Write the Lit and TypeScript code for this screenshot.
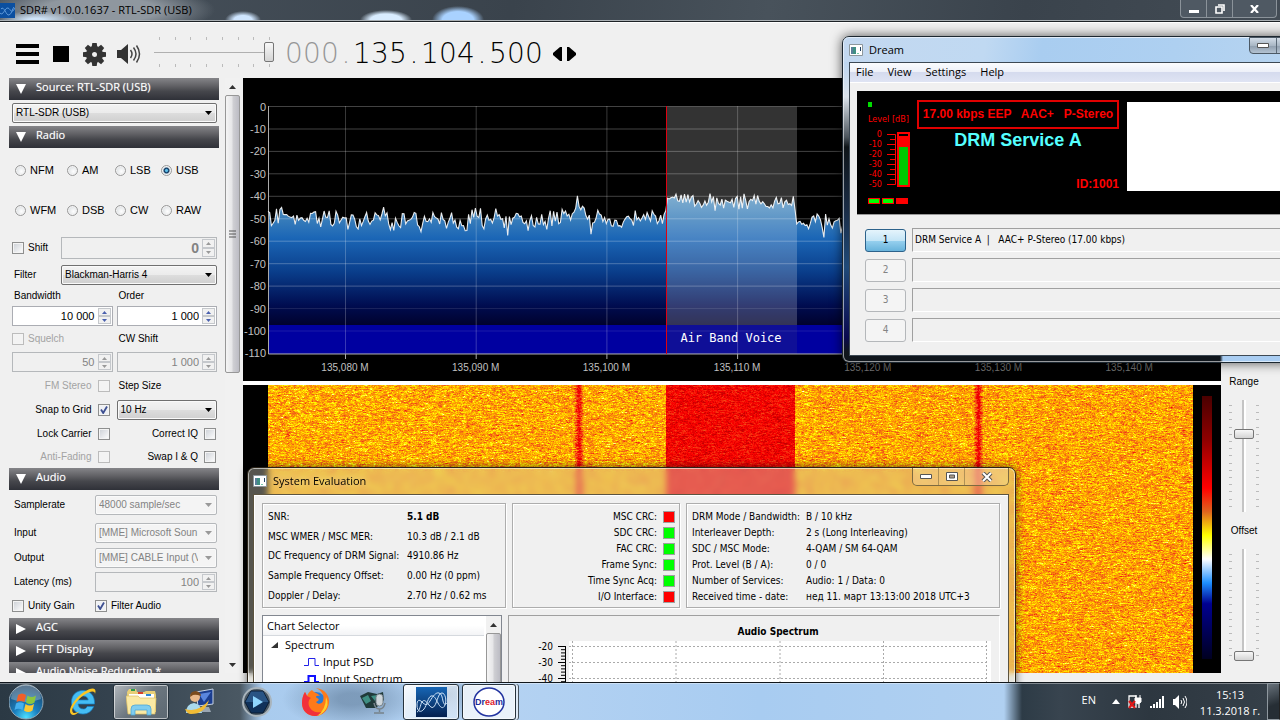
import { LitElement, html, svg, css } from "lit";
import { customElement } from "lit/decorators.js";

/* ---------- shared helpers ---------- */

const rng = (seed: number) => () => {
  seed = (seed + 0x6d2b79f5) | 0;
  let t = Math.imul(seed ^ (seed >>> 15), 1 | seed);
  t = (t + Math.imul(t ^ (t >>> 7), 61 | t)) ^ t;
  return ((t ^ (t >>> 14)) >>> 0) / 4294967296;
};

const base = css`
  :host, *, *::before, *::after { box-sizing: border-box; }
  button, input, select { font: inherit; color: inherit; margin: 0; padding: 0; border: 0; border-radius: 0; outline: 0; }
  button { background: none; }
  svg { display: block; }
  .scroll { display: flex; flex-direction: column; background: #f1f1f1; }
  .scroll button { height: 17px; flex: none; display: grid; place-items: center; }
  .scroll .thumb { border: 1px solid #979797; border-radius: 2px; background: linear-gradient(90deg, #f5f5f5, #e6e6e8 45%, #cfcfd3 55%, #bcbcc4); display: grid; place-items: center; }
  .scroll .rest { flex: 1; }
`;

const upArrow = svg`<svg width="7" height="4" viewBox="0 0 7 4"><path d="M0 4 3.5 0 7 4z" fill="#333"/></svg>`;
const downArrow = svg`<svg width="7" height="4" viewBox="0 0 7 4"><path d="M0 0 3.5 4 7 0z" fill="#333"/></svg>`;
const appIcon = html`<svg width="14" height="12" viewBox="0 0 14 12"><path d="M.5.5h13v11H.5z" fill="#fff" stroke="#8d979c"/><path d="M2 3h5v7H2z" fill="#3f8f83"/><path d="M2 3h2v7H2z" fill="#5b7f9a"/><path d="M8 9h2v1H8z" fill="#7ca"/><path d="M11 3h1v4h-1z" fill="#246"/></svg>`;

/* ---------- receiver side panel ---------- */

@customElement("sdr-sidebar")
class SdrSidebar extends LitElement {
  static styles = [base, css`
    :host { display: flex; gap: 6px; font: 10px/14px "Liberation Sans", Arial, sans-serif; color: #000; min-height: 0; }
    .panel { width: 210px; overflow: hidden; }
    .head { display: flex; width: 100%; height: 22px; padding: 0 0 4px 7px; gap: 10px; align-items: center; text-align: left; color: #fff;
      font: 11px/16px "Open Sans", "Noto Sans", sans-serif; text-shadow: 0 0 1px #fff8; background: linear-gradient(#858589, #626266 35%, #46474c 60%, #2f3138); }
    .head svg { position: relative; top: 2px; }
    .row { display: flex; align-items: center; padding: 0 2px 0 3px; gap: 4px; height: 24px; }
    .pair { display: grid; grid-template-columns: minmax(0, 1fr) minmax(0, 1fr); }
    .h16 { height: 16px; } .h22 { height: 22px; } .h26 { height: 26px; } .h28 { height: 28px; } .h30 { height: 30px; }
    .radios { display: grid; grid-template-columns: 52px 48px 46px 1fr; grid-auto-rows: 40px; padding: 2px 0 0 6px; margin: 0 0 4px; border: 0; font-size: 11px; }
    .radios label, .tick { display: flex; align-items: center; gap: 4px; }
    .label { padding-left: 2px; }
    .wide { width: 45px; } .audio { width: 79px; }
    .right { justify-content: flex-end; padding-right: 1px; gap: 6px; }
    .right:first-child { padding-right: 3px; }
    .off { color: #a3a3a3; }
    input[type="radio"] { appearance: none; width: 11px; height: 11px; border: 1px solid #999; border-radius: 50%; background: radial-gradient(circle at 60% 60%, #fff, #cfd4d8); box-shadow: inset 0 0 0 1px #f4f4f4; }
    input[type="radio"]:checked { background: radial-gradient(circle, #5fc0ea 0 15%, #123a63 35%, #e6eef3 60%); }
    input[type="checkbox"] { appearance: none; width: 12px; height: 12px; border: 1px solid #8e8f8f; background: linear-gradient(135deg, #cbcfd5, #fff); box-shadow: inset 0 0 0 1px #f4f4f4; }
    input[type="checkbox"]:disabled { border-color: #bcbcbc; background: #f3f3f3; }
    input[type="checkbox"]:checked { background: url("data:image/svg+xml,%3Csvg xmlns='http://www.w3.org/2000/svg' viewBox='0 0 10 10'%3E%3Cpath d='M2 4.5 4.2 8 8 1.5' fill='none' stroke='%233d4f91' stroke-width='1.8'/%3E%3C/svg%3E") #eef0f4; }
    select { appearance: none; flex: 1; min-width: 0; height: 20px; padding: 0 18px 0 3px; border: 1px solid #707070; border-radius: 2px; overflow: hidden;
      background: url("data:image/svg+xml,%3Csvg xmlns='http://www.w3.org/2000/svg' width='7' height='4'%3E%3Cpath d='M0 0h7L3.5 4z'/%3E%3C/svg%3E") no-repeat right 4px center, linear-gradient(#f3f3f3, #ebebeb 50%, #dddddd 51%, #cfcfcf); box-shadow: inset 0 0 0 1px #fafafa; }
    select:disabled { opacity: 1; color: #838383; border-color: #b5b8bb;
      background: url("data:image/svg+xml,%3Csvg xmlns='http://www.w3.org/2000/svg' width='7' height='4'%3E%3Cpath d='M0 0h7L3.5 4z' fill='%23999'/%3E%3C/svg%3E") no-repeat right 4px center, #f4f4f4; }
    .spin { display: flex; flex: 1; min-width: 0; height: 20px; border: 1px solid #abadb3; background: #fff; padding: 1px; font-size: 11px; }
    .spin input { flex: 1; min-width: 0; width: 0; background: none; text-align: right; padding-right: 3px; }
    .spin.off { background: #f0f0f0; color: #838383; border-color: #b5b8bb; }
    .spin.big { height: 22px; font-size: 14px; font-weight: bold; }
    .arrows { display: flex; flex-direction: column; width: 13px; }
    .arrows button { flex: 1; display: grid; place-items: center; border: 1px solid #c5c8cc; background: #f1f1f1; color: #4a60ae; }
    .off .arrows button { color: #999; }
    .scroll { width: 15px; }
    .scroll .thumb { height: 278px; }
  `];

  head(text: string, open = true) {
    return html`<button class="head">${open
      ? html`<svg width="10" height="10" viewBox="0 0 10 10"><path d="M0 0h10L5 10z" fill="#fff"/></svg>`
      : html`<svg width="10" height="10" viewBox="0 0 10 10"><path d="M0 0v10l10-5z" fill="#fff"/></svg>`}<span>${text}</span></button>`;
  }

  spin(id: string, value: string, off = false, cls = "") {
    return html`<div class="spin ${off ? "off" : ""} ${cls}">
      <input id=${id} type="text" aria-label=${id} .value=${value} ?disabled=${off} />
      <div class="arrows">
        <button aria-label="Increase"><svg width="5" height="3" viewBox="0 0 5 3"><path d="M0 3 2.5 0 5 3z" fill="currentColor"/></svg></button>
        <button aria-label="Decrease"><svg width="5" height="3" viewBox="0 0 5 3"><path d="M0 0 2.5 3 5 0z" fill="currentColor"/></svg></button>
      </div></div>`;
  }

  after(text: string, off = false, checked = false) {
    return html`<label class="tick ${off ? "off" : ""}"><input type="checkbox" ?disabled=${off} .checked=${checked} />${text}</label>`;
  }

  before(text: string, off = false, checked = false) {
    return html`<label class="tick right ${off ? "off" : ""}">${text}<input type="checkbox" ?disabled=${off} .checked=${checked} /></label>`;
  }

  render() {
    return html`
      <div class="panel">
        ${this.head("Source: RTL-SDR (USB)")}
        <div class="row h26"><select aria-label="Source"><option>RTL-SDR (USB)</option></select></div>
        ${this.head("Radio")}
        <fieldset class="radios">
          ${["NFM", "AM", "LSB", "USB", "WFM", "DSB", "CW", "RAW"].map(
            (m) => html`<label><input type="radio" name="mode" .checked=${m === "USB"} />${m}</label>`)}
        </fieldset>
        <div class="row h28"><span class="wide">${this.after("Shift")}</span>${this.spin("shift", "0", true, "big")}</div>
        <div class="row h26"><label class="label wide" for="filter">Filter</label><select id="filter"><option>Blackman-Harris 4</option></select></div>
        <div class="row pair h16"><label class="label" for="bandwidth">Bandwidth</label><label class="label" for="order">Order</label></div>
        <div class="row pair">${this.spin("bandwidth", "10 000")}${this.spin("order", "1 000")}</div>
        <div class="row pair h22">${this.after("Squelch", true)}<label class="label" for="cwshift">CW Shift</label></div>
        <div class="row pair">${this.spin("squelch", "50", true)}${this.spin("cwshift", "1 000", true)}</div>
        <div class="row pair">${this.before("FM Stereo", true)}<label class="label" for="step">Step Size</label></div>
        <div class="row pair">${this.before("Snap to Grid", false, true)}<select id="step"><option>10 Hz</option></select></div>
        <div class="row pair">${this.before("Lock Carrier")}${this.before("Correct IQ")}</div>
        <div class="row pair h22">${this.before("Anti-Fading", true)}${this.before("Swap I & Q")}</div>
        ${this.head("Audio")}
        <div class="row h30"><label class="label audio" for="rate">Samplerate</label><select id="rate" disabled><option>48000 sample/sec</option></select></div>
        <div class="row h26"><label class="label audio" for="input">Input</label><select id="input" disabled><option>[MME] Microsoft Soun</option></select></div>
        <div class="row"><label class="label audio" for="output">Output</label><select id="output" disabled><option>[MME] CABLE Input (V</option></select></div>
        <div class="row"><label class="label audio" for="latency">Latency (ms)</label>${this.spin("latency", "100", true)}</div>
        <div class="row"><span class="audio">${this.after("Unity Gain")}</span>${this.after("Filter Audio", false, true)}</div>
        ${this.head("AGC", false)}${this.head("FFT Display", false)}${this.head("Audio Noise Reduction *", false)}
      </div>
      <div class="scroll">
        <button aria-label="Scroll up">${upArrow}</button>
        <div class="thumb"><svg width="7" height="8" viewBox="0 0 7 8"><path d="M0 1h7M0 4h7M0 7h7" stroke="#555"/></svg></div>
        <div class="rest"></div>
        <button aria-label="Scroll down">${downArrow}</button>
      </div>`;
  }
}

/* ---------- spectrum plot ---------- */

@customElement("spectrum-view")
class SpectrumView extends LitElement {
  static styles = [base, css`
    :host { display: block; height: 303px; background: #000; overflow: hidden; }
    .plot { width: 100%; height: 303px; }
    .axis { font: 11px "Liberation Sans", Arial, sans-serif; fill: #c0c0c0; }
    .freq { font-size: 10px; }
    .band { font: 12px "DejaVu Sans Mono", monospace; fill: #fff; }
  `];

  private trace() {
    const r = rng(77);
    const pts: string[] = [];
    let slow = 0;
    for (let x = 25; x < 620; x += 1.7) {
      slow = slow * 0.6 + (r() - 0.5) * 9;
      let y = 140.5 + slow + (r() - 0.5) * 14;
      if (r() > 0.94) y += 8;
      const d = Math.abs(x - 336.5);
      if (d < 9) y -= (9 - d) * 2.3;
      if (x > 423 && x < 553) y = 123 + slow * 0.9 + (r() - 0.5) * 12;
      else if (x >= 553) y += 3;
      pts.push(`${x.toFixed(1)} ${y.toFixed(1)}`);
    }
    return pts.join("L");
  }

  render() {
    const line = this.trace();
    const rows = Array.from({ length: 12 }, (_, i) => i);
    return html`<svg class="plot" viewBox="0 0 978 303" preserveAspectRatio="xMinYMin slice">
      <defs><linearGradient id="fill" gradientUnits="userSpaceOnUse" x1="0" y1="100" x2="0" y2="250">
        <stop offset="0" stop-color="#7fb0cc"/><stop offset=".25" stop-color="#3d81bb"/><stop offset=".4" stop-color="#1b66b6"/>
        <stop offset=".62" stop-color="#0a3f8c"/><stop offset=".85" stop-color="#000c50"/><stop offset="1" stop-color="#000028"/>
      </linearGradient></defs>
      <path d="M25 276L${line}L620 276z" fill="url(#fill)"/>
      <path d="M25 247H978V276H25z" fill="#0000a0"/>
      <path d="M423 28.5H554V276H423z" fill="#fff" fill-opacity=".2"/>
      <path d="M423 247H554V276H423z" fill="#00008c" fill-opacity=".7"/>
      ${rows.map((i) => svg`<path d="M25 ${(28.5 + i * 22.45).toFixed(1)}H978" stroke="#fff" stroke-opacity=${i < 9 ? 0.26 : 0.1}/>
        <text class="axis" x="23" y=${Math.round(32.5 + i * 22.45)} text-anchor="end">${i ? -10 * i : 0}</text>`)}
      ${rows.slice(0, 7).map((i) => svg`<path d="M${102.5 + i * 130.7} 28V276" stroke="#fff" stroke-opacity=".22"/>
        <path d="M${102.5 + i * 130.7} 276v5" stroke="#aaa"/>
        <text class="axis freq" x=${102 + i * 130.7} y="293" text-anchor="middle" fill-opacity=${i > 3 ? 0.6 : 1}>135,${80 + i * 10 < 100 ? "0" : ""}${80 + i * 10} M</text>`)}
      <path d="M25.5 28V276H978" fill="none" stroke="#aaa"/>
      <path d="M${line}" fill="none" stroke="#fff" stroke-width="1.1" stroke-opacity=".9"/>
      <path d="M423.5 28V276" stroke="#e00010"/>
      <text class="band" x="488" y="264" text-anchor="middle">Air Band Voice</text>
    </svg>`;
  }
}

/* ---------- waterfall ---------- */

@customElement("waterfall-view")
class WaterfallView extends LitElement {
  static styles = [base, css`
    :host { display: flex; flex: 1; min-height: 0; background: #000; padding-left: 25px; }
    .field { flex: 1; min-width: 0; position: relative; overflow: hidden; }
    canvas { position: absolute; inset: 0; width: 100%; height: 100%; }
    .legend { width: 28px; padding: 11px 9px 14px 9px; display: flex; }
    .ramp { flex: 1; background: linear-gradient(#4a0000, #900000 17%, #ff0000 35%, #e0641e 44%, #ffff00 53%, #ffffff 62%, #1e90ff 71%, #000090 79%, #000020); }
  `];

  firstUpdated() {
    const c = this.renderRoot.querySelector("canvas")!;
    const w = (c.width = Math.max(1, c.clientWidth));
    const h = (c.height = Math.max(1, c.clientHeight));
    const g = c.getContext("2d")!;
    const img = g.createImageData(w, h);
    const r = rng(9);
    const stops = [[170, 0, 0], [250, 0, 0], [240, 88, 26], [255, 165, 0], [255, 255, 0], [255, 255, 255], [140, 200, 255]];
    for (let y = 0; y < h; y++) {
      let prev = 0;
      for (let x = 0; x < w; x++) {
        const n = r() + r() + r() + r() - 2;
        prev = prev * 0.45 + n * 0.85;
        let v = 3.05 + prev * 0.95 - (x / w) * 0.1;
        if (x > 397 && x < 527) v = 1 + prev * 0.6;
        const d = Math.min(Math.abs(x - 310.5), Math.abs(x - 710));
        if (d < 5) v -= (5 - d) * 0.45;
        v = Math.max(0.3, Math.min(5.9, v));
        if (d < 4) v = Math.max(0.8, v);
        const i = Math.floor(v), f = v - i, o = (y * w + x) * 4;
        for (let k = 0; k < 3; k++) img.data[o + k] = stops[i][k] * (1 - f) + stops[i + 1][k] * f;
        img.data[o + 3] = 255;
      }
    }
    g.putImageData(img, 0, 0);
  }

  render() {
    return html`<div class="field"><canvas></canvas></div><div class="legend"><div class="ramp"></div></div>`;
  }
}

/* ---------- main receiver window ---------- */

@customElement("sdr-window")
class SdrWindow extends LitElement {
  static styles = [base, css`
    :host { display: flex; flex-direction: column; height: 100%; background: #f0f0f0; font: 10px/14px "Liberation Sans", Arial, sans-serif; }
    .title { display: flex; align-items: flex-start; height: 22px; border-bottom: 1px solid #1d2226; box-shadow: inset 0 -1px #aab0b4, 0 1px #fff; color: #000;
      font: 11px/20px "Open Sans", sans-serif; background:
        radial-gradient(18px 9px at 243px 20px, #cfe6ff 50%, transparent), radial-gradient(26px 10px at 386px 20px, #d8ecff 60%, transparent),
        radial-gradient(26px 14px at 458px 20px, #a9d2ff 60%, transparent), radial-gradient(40px 9px at 36px 20px, #cfe4f8 20%, transparent),
        radial-gradient(115px 26px at 100px 10px, #8f979f 50%, transparent), linear-gradient(100deg, #48525c, #3a434c 40%, #48525b 60%, #3a434c 80%, #434c55); }
    .logo { margin: 3px 5px 0 0; }
    .caption { flex: 1; }
    .winbtns { display: flex; height: 18px; margin-right: 3px; border: 1px solid #8b939a; border-top: 0; border-radius: 0 0 4px 4px; background: #4f5963; }
    .winbtns button { width: 26px; display: grid; place-items: center; border-right: 1px solid #8b939a; }
    .winbtns button:last-child { width: 43px; border: 0; }
    .tools { display: flex; align-items: center; height: 56px; padding: 8px 0 0 16px; }
    .tools .icon { display: grid; place-items: center start; }
    .menu { width: 37px; } .stop { width: 30px; } .gear { width: 34px; } .mute { width: 37px; }
    .volume { position: relative; width: 120px; height: 30px; display: flex; flex-direction: column; justify-content: space-between; margin: 0 11px 4px 0; }
    .ticks { display: flex; justify-content: space-between; padding: 0 4px 0 5px; }
    .ticks i { width: 1px; height: 3px; background: #bbb; }
    .volume input { appearance: none; position: absolute; inset: 4px 0; width: 120px; background: none; }
    input::-webkit-slider-runnable-track { background: linear-gradient(#b0b0b0, #b0b0b0) center / 100% 1px no-repeat; }
    .volume input::-webkit-slider-thumb { appearance: none; width: 10px; height: 20px; border: 1px solid #767676; border-radius: 2px; background: linear-gradient(#f8f8f8, #d4d4d4); }
    .freq { display: flex; font: 200 28px/30px "DejaVu Sans", sans-serif; margin: 0 10px 0 0; color: #000; }
    .freq span { width: 18px; text-align: center; }
    .freq .dot { width: 14px; }
    .freq .dim { color: #969696; }
    .step { display: flex; gap: 5px; }
    .body { display: flex; flex: 1; min-height: 0; padding: 0 0 9px 9px; }
    .views { display: flex; flex-direction: column; flex: 1; min-width: 0; gap: 4px; margin-left: 3px; background: #fff; }
    .levels { width: 59px; display: flex; flex-direction: column; align-items: center; padding: 297px 13px 0 0; }
    .meter { display: flex; height: 112px; margin: 11px 0 12px; gap: 2px; }
    .vticks { display: flex; flex-direction: column; justify-content: space-between; padding: 5px 0; }
    .vticks i { width: 3px; height: 1px; background: #bbb; }
    .meter input { appearance: none; writing-mode: vertical-lr; direction: rtl; width: 20px; height: 112px; background: linear-gradient(90deg, #c4c4c4 50%, #fff 50%) center / 4px 100% no-repeat; }
    .meter input::-webkit-slider-runnable-track { background: none; }
    .meter input::-webkit-slider-thumb { appearance: none; width: 20px; height: 10px; border: 1px solid #767676; border-radius: 2px; background: linear-gradient(#f8f8f8, #d4d4d4); }
  `];

  meter(label: string, value: number) {
    const t = Array.from({ length: 15 }, () => html`<i></i>`);
    return html`<label for=${label}>${label}</label>
      <div class="meter"><div class="vticks">${t}</div><input id=${label} type="range" min="0" max="100" .value=${String(value)} /><div class="vticks">${t}</div></div>`;
  }

  render() {
    const freq = "000.135.104.500";
    const ticks = Array.from({ length: 8 }, () => html`<i></i>`);
    const teeth = Array.from({ length: 8 }, (_, i) => svg`<path d="M9.3 0h4.4l.6 4h-5.6z" transform="rotate(${i * 45} 11.5 11.5)"/>`);
    return html`
      <div class="title">
        <svg class="logo" width="15" height="15" viewBox="0 0 15 15"><path d="M0 0h15v15H0z" fill="#0b4fa0"/><path d="M0 10C3 14 5 4 8 5s3 7 7 0M1 6c3-4 5 7 8 6s3-6 5-8" fill="none" stroke="#5f9ada"/></svg>
        <span class="caption">SDR# v1.0.0.1637 - RTL-SDR (USB)</span>
        <div class="winbtns">
          <button aria-label="Minimize"><svg width="10" height="10" viewBox="0 0 10 10"><path d="M0 6h10v3H0z" fill="#fff"/></svg></button>
          <button aria-label="Restore"><svg width="10" height="10" viewBox="0 0 10 10"><path d="M3 1h6v6M1 3h6v6H1z" fill="none" stroke="#fff" stroke-width="1.6"/></svg></button>
          <button aria-label="Close"><svg width="9" height="8" viewBox="0 0 9 8"><path d="M1 0 8 8M8 0 1 8" stroke="#fff" stroke-width="2.2"/></svg></button>
        </div>
      </div>
      <div class="tools">
        <button class="icon menu" aria-label="Menu"><svg width="23" height="20" viewBox="0 0 23 20"><path d="M0 0h23v4H0zM0 8h23v4H0zM0 16h23v4H0z"/></svg></button>
        <button class="icon stop" aria-label="Stop"><svg width="16" height="16" viewBox="0 0 16 16"><path d="M0 0h16v16H0z"/></svg></button>
        <button class="icon gear" aria-label="Settings"><svg width="23" height="23" viewBox="0 0 23 23" fill="#333">${teeth}<path fill-rule="evenodd" d="M11.5 3a8.5 8.5 0 1 0 0 17 8.5 8.5 0 0 0 0-17zm0 6a2.5 2.5 0 1 1 0 5 2.5 2.5 0 0 1 0-5z"/></svg></button>
        <button class="icon mute" aria-label="Mute"><svg width="24" height="20" viewBox="0 0 24 20"><path d="M0 6h4l7-6v20l-7-6H0z" fill="#333"/><path d="M13.5 6q3 4 0 8M16.5 3.5q5 6.5 0 13M19.5 1.5q6 8.5 0 17" fill="none" stroke="#444" stroke-width="1.5"/></svg></button>
        <div class="volume"><div class="ticks">${ticks}</div><input type="range" aria-label="Volume" min="0" max="100" .value=${"100"} /><div class="ticks">${ticks}</div></div>
        <div class="freq">${[...freq].map((c, i) => html`<span class="${c === "." ? "dot" : ""} ${i < 4 ? "dim" : ""}">${c}</span>`)}</div>
        <div class="step">
          <button aria-label="Step down"><svg width="9" height="14" viewBox="0 0 9 14"><path d="M9 0v14L7 14 0 8V6L7 0z"/></svg></button>
          <button aria-label="Step up"><svg width="9" height="14" viewBox="0 0 9 14"><path d="M0 0v14l2 0 7-6V6L2 0z"/></svg></button>
        </div>
      </div>
      <div class="body">
        <sdr-sidebar></sdr-sidebar>
        <div class="views"><spectrum-view></spectrum-view><waterfall-view></waterfall-view></div>
        <div class="levels">${this.meter("Range", 72)}${this.meter("Offset", 0)}</div>
      </div>`;
  }
}

/* ---------- Dream window ---------- */

@customElement("dream-window")
class DreamWindow extends LitElement {
  static styles = [base, css`
    :host { display: block; border: 1px solid #1c2730; border-radius: 7px 7px 0 7px; box-shadow: 0 0 12px #000a; font: 10px/14px "DejaVu Sans Condensed", "DejaVu Sans", sans-serif; color: #000;
      background: linear-gradient(90deg, transparent 377px, #a9cdf2 380px) 0 100% / 100% 8px no-repeat, linear-gradient(#bed6f0 0 25px, #dbe3ec 60px, #4d565e 100px, #0e1418 110px, #1a2c44 170px, #204a78 230px, #0a0a50 300px, #10161c 315px); }
    .frame { border: 1px solid #ffffff90; border-right: 0; border-radius: 6px; padding: 0 0 5px 5px; }
    .title { position: relative; display: flex; align-items: center; gap: 6px; height: 24px; font: 11px/24px "Open Sans", sans-serif; background: linear-gradient(100deg, #c3d8f0, #c0d9f2 30%, #a9cdf0 42%, #aed0f1 70%, #b9d5f0); margin-left: -5px; padding-left: 5px; border-radius: 5px 0 0 0; }
    .ctl { position: absolute; right: 0; top: -1px; width: 66px; height: 17px; display: flex; border: 1px solid #4c5965; border-radius: 0 0 4px 4px; background: linear-gradient(#d3dde8, #a9b7c5 50%, #8e9dad 51%, #b4c3d2); }
    .ctl button { width: 27px; display: grid; place-items: center; border-right: 1px solid #5b6a78; }
    .client { background: #f0f0f0; border: 1px solid #3d4954; border-right: 0; }
    .menu { display: flex; gap: 14px; height: 20px; padding-left: 6px; font: 11px/18px "Open Sans", sans-serif; background: linear-gradient(#fbfcfe, #eef1f9 45%, #d5dbee 50%, #dfe4f3); border-bottom: 1px solid #fff; }
    .display { display: flex; height: 124px; margin: 8px 0 0 7px; background: #000; border-bottom: 1px solid #999; color: #f00; }
    .level { width: 60px; padding: 11px 0 0 11px; font-size: 9px; line-height: 10px; }
    .led { width: 4px; height: 5px; background: #0d0; margin-bottom: 7px; }
    .gauge { display: flex; gap: 3px; margin: 5px 0; white-space: nowrap; }
    .nums { width: 14px; text-align: right; height: 60px; }
    .lamps { display: flex; gap: 2px; padding-top: 4px; }
    .lamps i { width: 12px; height: 6px; border: 1px solid #f00; background: #0f0; }
    .lamps i.bad { background: #f00; }
    .info { display: flex; flex-direction: column; width: 202px; margin: 9px 8px 0 0; font: bold 12px/14px "Liberation Sans", Arial, sans-serif; }
    .codec { height: 29px; border: 2px solid #e00000; line-height: 25px; text-align: center; white-space: pre; }
    .name { color: #5ff; font-size: 18px; line-height: 22px; text-align: center; }
    .id { text-align: right; margin-top: 26px; }
    .text { flex: 1; background: #fff; margin: 11px 0 23px; }
    .services { display: grid; gap: 6px; padding: 13px 0 13px 15px; margin: 0; }
    .service { display: flex; align-items: center; gap: 6px; height: 24px; }
    .service button { width: 41px; height: 23px; border: 1px solid #b4b7ba; border-radius: 3px; background: #f4f4f4; color: #838383; }
    .service button.on { color: #000; border-color: #2c628b; background: linear-gradient(#e5f4fc, #c4e5f6 50%, #98d1ef 51%, #68b3db); }
    .field { flex: 1; height: 24px; padding: 0 2px; line-height: 22px; white-space: pre; border: 1px solid #fff; border-top-color: #a0a0a0; border-left-color: #a0a0a0; }
  `];

  render() {
    return html`<div class="frame">
      <div class="title">${appIcon}<span>Dream</span><div class="ctl"><button aria-label="Minimize"><svg width="12" height="5" viewBox="0 0 12 5"><path d="M.5.5h11v4H.5z" fill="#fff" stroke="#555"/></svg></button></div></div>
      <div class="client">
        <nav class="menu">${["File", "View", "Settings", "Help"].map((m) => html`<span>${m}</span>`)}</nav>
        <div class="display">
          <div class="level">
            <div class="led"></div><div>Level [dB]</div>
            <div class="gauge">
              <div class="nums">${[0, -10, -20, -30, -40, -50].map((n) => html`<div>${n}</div>`)}</div>
              <svg width="26" height="60" viewBox="0 0 26 60"><path d="M2 5.5H10.5V55.5H2M2 15.5h8M2 25.5h8M2 35.5h8M2 45.5h8M5 10.5h5M5 20.5h5M5 30.5h5M5 40.5h5M5 50.5h5" fill="none" stroke="#f00"/><path d="M12 3h13v55H12z" fill="#f00"/><path d="M14 5h9v2h-9z" fill="#000"/><path d="M14 18h9v38h-9z" fill="#00c800"/></svg>
            </div>
            <div class="lamps"><i></i><i></i><i class="bad"></i></div>
          </div>
          <div class="info"><div class="codec">17.00 kbps EEP   AAC+   P-Stereo</div><div class="name">DRM Service A</div><div class="id">ID:1001</div></div>
          <div class="text"></div>
        </div>
        <div class="services">${[1, 2, 3, 4].map((n) => html`<div class="service"><button class=${n === 1 ? "on" : ""} ?disabled=${n > 1}>${n}</button><div class="field">${n === 1 ? "DRM Service A  |   AAC+ P-Stereo (17.00 kbps)" : ""}</div></div>`)}</div>
      </div></div>`;
  }
}

/* ---------- System Evaluation window ---------- */

@customElement("evaluation-window")
class EvaluationWindow extends LitElement {
  static styles = [base, css`
    :host { display: flex; flex-direction: column; border: 1px solid #2b2419; border-radius: 7px; padding: 0 6px 6px 5px; box-shadow: inset 0 0 0 1px #ffffff90, 0 0 9px #0009; color: #000;
      background: rgb(215 212 195 / .4); backdrop-filter: blur(3px); font: 10px/16px "DejaVu Sans Condensed", "DejaVu Sans", sans-serif; }
    .title { display: flex; align-items: center; gap: 6px; height: 26px; font: 11px/26px "Open Sans", sans-serif; }
    .title span { flex: 1; text-shadow: 0 0 6px #fff8; }
    .ctl { display: flex; align-self: flex-start; height: 18px; border: 1px solid #7d6a40; border-top: 0; border-radius: 0 0 5px 5px; background: #ffffff30; }
    .ctl button { width: 26px; display: grid; place-items: center; border-right: 1px solid #7d6a4090; }
    .ctl button:last-child { width: 43px; border: 0; }
    .client { flex: 1; min-height: 0; display: flex; flex-direction: column; gap: 7px; background: #f0f0f0; border: 1px solid #5c5440; box-shadow: inset 1px 1px #fff; padding: 8px 8px 0; }
    .groups { display: grid; grid-template-columns: 244px 168px 1fr; gap: 6px; }
    .group { margin: 0; border: 1px solid #adadad; box-shadow: inset 1px 1px #fff, 1px 1px #fff; height: 105px; padding: 5px 4px 2px 5px; display: grid; align-items: center; }
    .group div { display: contents; }
    .group dt, .group dd { margin: 0; white-space: nowrap; }
    .group.snr { grid-template-columns: 139px 1fr; padding: 3px 4px 1px 5px; }
    .crc { grid-template-columns: 1fr 12px; gap: 0 6px; text-align: right; }
    .mode { grid-template-columns: 114px 1fr; }
    .strong { font-weight: bold; }
    .lamp { width: 12px; height: 12px; background: #0f0; border: 1px solid #a0a0a0; }
    .lamp.bad { background: #f00; }
    .charts { display: flex; gap: 6px; flex: 1; min-height: 0; }
    .tree { display: flex; width: 240px; background: #fff; border: 1px solid #828790; font: 11px/16px "Open Sans", sans-serif; }
    .list { flex: 1; }
    .list h4 { margin: 0 2px 0 0; padding-left: 4px; font: inherit; line-height: 20px; height: 20px; background: linear-gradient(#fff 50%, #f3f4f6); border-bottom: 1px solid #d5d9de; }
    .list ul { margin: 0; padding: 0; list-style: none; }
    .list li { display: flex; align-items: center; gap: 7px; height: 17px; padding-left: 8px; }
    .list li.leaf { gap: 4px; padding-left: 41px; }
    .scroll { width: 15px; } .scroll .thumb { height: 50px; display: block; }
    .graph { flex: 1; border: 1px solid #a0a0a0; border-right-color: #fff; overflow: hidden; }
    .graph h4 { margin: 8px 12px 1px 60px; font-size: 10px; line-height: 16px; text-align: center; }
    .scale { font: 10px "DejaVu Sans Condensed", "DejaVu Sans", sans-serif; }
  `];

  pair(k: string, v: unknown, cls = "") {
    return html`<div><dt>${k}</dt><dd class=${cls}>${v}</dd></div>`;
  }

  render() {
    const minor = Array.from({ length: 14 }, (_, i) => `M52 ${5.5 + i * 3.2}h5`).join("");
    const grid = [63.5, 167, 271, 374.5, 477.5];
    return html`
      <div class="title">${appIcon}<span>System Evaluation</span>
        <div class="ctl">
          <button aria-label="Minimize"><svg width="12" height="5" viewBox="0 0 12 5"><path d="M.5.5h11v4H.5z" fill="#fff" stroke="#555"/></svg></button>
          <button aria-label="Maximize"><svg width="12" height="9" viewBox="0 0 12 9"><path d="M.5.5h11v8H.5z" fill="#fff" stroke="#555"/><path d="M3.5 3h5v3h-5z" fill="#a98" stroke="#555"/></svg></button>
          <button aria-label="Close"><svg width="12" height="10" viewBox="0 0 12 10"><path d="M2 1 10 9M10 1 2 9" stroke="#555" stroke-width="4"/><path d="M2 1 10 9M10 1 2 9" stroke="#fff" stroke-width="2"/></svg></button>
        </div></div>
      <div class="client">
        <div class="groups">
          <dl class="group snr">
            ${this.pair("SNR:", "5.1 dB", "strong")}${this.pair("MSC WMER / MSC MER:", "10.3 dB / 2.1 dB")}${this.pair("DC Frequency of DRM Signal:", "4910.86 Hz")}
            ${this.pair("Sample Frequency Offset:", "0.00 Hz (0 ppm)")}${this.pair("Doppler / Delay:", "2.70 Hz / 0.62 ms")}
          </dl>
          <dl class="group crc">${[["MSC CRC:", 1], ["SDC CRC:", 0], ["FAC CRC:", 0], ["Frame Sync:", 0], ["Time Sync Acq:", 0], ["I/O Interface:", 1]].map(([t, bad]) => this.pair(String(t), "", bad ? "lamp bad" : "lamp"))}</dl>
          <dl class="group mode">
            ${this.pair("DRM Mode / Bandwidth:", "B / 10 kHz")}${this.pair("Interleaver Depth:", "2 s (Long Interleaving)")}${this.pair("SDC / MSC Mode:", "4-QAM / SM 64-QAM")}
            ${this.pair("Prot. Level (B / A):", "0 / 0")}${this.pair("Number of Services:", "Audio: 1 / Data: 0")}${this.pair("Received time - date:", "нед 11. март 13:13:00 2018 UTC+3")}
          </dl>
        </div>
        <div class="charts">
          <div class="tree">
            <div class="list"><h4>Chart Selector</h4><ul>
              <li><svg width="7" height="6" viewBox="0 0 7 6"><path d="M7 0v6H0z" fill="#333"/></svg>Spectrum</li>
              <li class="leaf"><svg width="15" height="8" viewBox="0 0 15 8"><path d="M0 7.5H4.5V.5H11V7.5H15" fill="none" stroke="#2222e8"/></svg>Input PSD</li>
              <li class="leaf"><svg width="15" height="8" viewBox="0 0 15 8"><path d="M0 7H4.5V1H11V7H15" fill="none" stroke="#1010ff" stroke-width="2"/></svg>Input Spectrum</li>
            </ul></div>
            <div class="scroll"><button aria-label="Scroll up">${upArrow}</button><div class="thumb"></div></div>
          </div>
          <div class="graph"><h4>Audio Spectrum</h4>
            <svg width="100%" height="60"><path d="M60 0H482V60H60z" fill="#fff"/>
              <path d="${grid.map((x) => `M${x} 0V60`).join("")}M60 5.5H480M60 21.5H480M60 37.5H480" stroke="#aaa" stroke-dasharray="2 2"/>
              <path d="M56.5 5V60M49 5.5h8M49 21.5h8M49 37.5h8${minor}" stroke="#000" fill="none"/>
              ${[-20, -30, -40].map((n, i) => svg`<text class="scale" x="44" y=${9 + i * 16} text-anchor="end">${n}</text>`)}
            </svg></div>
        </div>
      </div>`;
  }
}

/* ---------- taskbar ---------- */

@customElement("task-bar")
class TaskBar extends LitElement {
  static styles = [base, css`
    :host { display: flex; height: 38px; position: relative; border-top: 1px solid #11171c; box-shadow: inset 0 1px #ffffff60; color: #fff; font: 11px/15px "Open Sans", "Noto Sans", sans-serif;
      background: radial-gradient(70px 30px at 352px 16px, #54708d88 20%, transparent), radial-gradient(30px 26px at 450px 12px, #54708d66, transparent),
        linear-gradient(90deg, #2b3944, #35434f 120px, #4a5863 240px, #a9cbee 262px, #b4d2f2 500px, #a8ccf1 760px, #b0d0f1 1004px, #2d3b46 1022px, #38444f 1060px, #2d3740 1150px, #364049); }
    .apps { display: flex; flex: 1; padding: 1px 0 0; }
    .slot { width: 58px; display: grid; place-items: center; }
    .start { width: 54px; }
    .box { width: 56px; height: 36px; display: grid; place-items: center; border: 1px solid #26323c; border-radius: 3px; box-shadow: inset 0 0 0 1px #ffffff90; background: linear-gradient(135deg, #ffffffa0, #ffffff40 50%, #ffffff28); }
    .light { background: linear-gradient(135deg, #fffffff0, #ffffff80 60%, #d9e9f9c0); }
    .pale { background: #f1f6fbe0; width: 54px; box-shadow: inset 0 0 0 1px #ffffff90, 2px 0 #dfeaf6, 3px 0 #47535e; }
    .tray { display: flex; align-items: center; gap: 8px; }
    .lang { margin: -4px 8px 0 0; }
    .clock { width: 62px; text-align: center; padding-top: 2px; line-height: 16px; margin-left: 4px; }
    .peek { width: 13px; height: 37px; margin-left: -2px; border: 1px solid #8f989f; border-right-color: #222; background: linear-gradient(160deg, #67717a, #262e35 60%); }
    .word { font: bold 9px "Liberation Sans", Arial, sans-serif; }
  `];

  render() {
    return html`
      <div class="apps">
        <button class="slot start" aria-label="Start"><svg width="36" height="36" viewBox="0 0 36 36">
          <defs><radialGradient id="orb" cx=".5" cy=".95" r=".9"><stop offset="0" stop-color="#4de0ff"/><stop offset=".4" stop-color="#1a7fbf"/><stop offset="1" stop-color="#1c4468"/></radialGradient></defs>
          <circle cx="17" cy="18" r="17" fill="url(#orb)" stroke="#93a9b8" stroke-width="1"/><path d="M2 15a15 15 0 0 1 30 0q-15 6-30 0z" fill="#fff" fill-opacity=".28"/>
          <path d="M9 11q4-3 8 0l-1.5 7q-4-2-8 0z" fill="#f0602a"/><path d="M18.5 11.5q4 3 8.5 0l-1.5 7q-4.5 3-8.5 0z" fill="#8cc63f"/><path d="M7 19.5q4-2.5 8 0l-1.5 6.5q-4-2.5-8 0z" fill="#45b0ee"/><path d="M16.5 20q4 3 8.5 0l-1.5 6.5q-4.5 3-8.5 0z" fill="#fcc832"/></svg></button>
        <button class="slot" aria-label="Internet Explorer"><svg width="30" height="30" viewBox="0 0 30 30"><path d="M15 3.5c-7 0-11.5 5-11.5 11.5S8 27 15 27c5 0 9-3 10.7-7.5h-6.5C18 21.5 17 22 15.3 22c-3 0-5-2-5.2-5H26.5C27 9 22.5 3.5 15 3.5zM10.2 13c.5-2.5 2.3-4 5-4s4.600 1.500 5 4z" fill="#45bdf3" stroke="#1581c8" stroke-width=".7"/><path d="M3 27C-1 23 7 11 16 5S29 1 27 7C27 3 22 4 16 8 8 13.5 2 23 5 25.5 6.5 27 10 25 12 24 8 28 5 29 3 27z" fill="#fbc523"/></svg></button>
        <button class="slot" aria-label="Explorer"><span class="box"><svg width="31" height="28" viewBox="0 0 31 28"><path d="M1 4 3 1h7l1 3h7l2-1h9l1 4v17H2z" fill="#e8cf77"/><path d="M3 6h25v4H3z" fill="#fff"/><path d="M5 1h4v2H5z" fill="#2a9a4a"/><path d="M12 4h5v2h-5z" fill="#d8402a"/><path d="M20 6h5v2h-5z" fill="#2a86d8"/><path d="M0 8h12l2 2h16l-1 16H2z" fill="#fae9a4" stroke="#dcbf62" stroke-width=".7"/><path d="M5 27v-6q0-4 4-4h12q4 0 4 4v6h-4v-5H9v5z" fill="#7fcdf0" stroke="#4fa6d6" stroke-width=".8"/></svg></span></button>
        <button class="slot" aria-label="Remote Assistance"><svg width="30" height="28" viewBox="0 0 30 28"><path d="M12 4 29 1v15l-15 2z" fill="#1b3d8f" stroke="#c8d4e4"/><path d="m15 6 12-2-7 10z" fill="#5a86de"/><path d="M17 19h8l2 5h-9z" fill="#9aa6b2"/><circle cx="11" cy="9" r="5" fill="#e9b88a"/><path d="M6 9q0-6 6-6 5 1 5 5-5-2-8-1z" fill="#7a4a1c"/><path d="M2 25q0-9 8-10 7 1 8 10z" fill="#a9d9ee"/><path d="M1 21q14 4 24-9-4 14-18 14Q3 26 1 21z" fill="#f0bb35"/></svg></button>
        <button class="slot" aria-label="Media Player"><svg width="30" height="30" viewBox="0 0 30 30"><circle cx="15" cy="15" r="14" fill="#4d5b66" stroke="#a9b4bc" stroke-width="2"/><path d="m9 4h12l6 11-6 11H9L3 15z" fill="#10315a" stroke="#0a1c33"/><path d="M3.5 15 9 4.5h12L26.5 15z" fill="#3b6ca0" fill-opacity=".6"/><path d="M11 9v12l10-6z" fill="#8fd6ff"/></svg></button>
        <button class="slot" aria-label="Firefox"><svg width="29" height="30" viewBox="0 0 29 30"><circle cx="15" cy="15" r="10" fill="#2a7bd6"/><path d="M11 3c2 3 6 3 8 6-4-1-5 1-3 2 3 1 2 3-1 4 2 3 6 2 7-1 2-6-2-11-7-13 9 1 14 8 13 15-1 8-7 13-14 13S1 24 1 16C1 12 2 8 4 5l2 4c1-3 3-5 5-6z" fill="#ff7a1a"/><path d="M4 5C2 8 1 12 1 16c0 8 6 13 13 13 4 0 8-2 11-6-6 4-14 3-17-4-1-4 0-7 2-8L6 9z" fill="#f2303c"/><path d="M25 10q4 8-2 15-3 3-7 4 9-6 9-19z" fill="#ffd02a"/></svg></button>
        <button class="slot" aria-label="Recorder"><svg width="28" height="26" viewBox="0 0 28 26"><path d="m1 7 8-4 9 2 6-2 1 8-8 8H7z" fill="#203a3a"/><path d="m3 9 6-3 3 6-5 3zM12 7l6-1-2 6z" fill="#3f8f83"/><rect x="17" y="5" width="7" height="12" rx="3.5" fill="#cdd5da" stroke="#77838b"/><path d="M15 14q1 6 5.5 6T26 14M20.5 20v3M15 24h10" fill="none" stroke="#77838b" stroke-width="1.5"/></svg></button>
        <button class="slot" aria-label="SDR Sharp"><span class="box light"><svg width="31" height="30" viewBox="0 0 31 30"><defs><linearGradient id="sdr" x1="0" x2="0" y1="0" y2="1"><stop offset="0" stop-color="#1766b5"/><stop offset="1" stop-color="#04204f"/></linearGradient></defs><path d="M0 0h31v30H0z" fill="url(#sdr)"/><path d="M1 18c0-5 2-6 5-3s5 4 8-1 6-9 9-8 3 4 4 8 2 4 4 2M1 18c0 7 4 8 7 4s4-12 7-13 5 3 7 7 5 7 7 2 0-12-3-12-4 5-6 10-4 6-7 2-5-6-7-3-2 9-5 10" fill="none" stroke="#cde2f7" stroke-width="1"/></svg></span></button>
        <button class="slot" aria-label="Dream"><span class="box pale"><svg width="32" height="30" viewBox="0 0 32 30"><ellipse cx="16" cy="15" rx="15" ry="14" fill="#fff" stroke="#2233a0" stroke-width="1.5"/><text class="word" x="16" y="18" text-anchor="middle" fill="#1d2c9c">Dr<tspan fill="#e0202a">ea</tspan>m</text></svg></span></button>
      </div>
      <div class="tray">
        <span class="lang">EN</span>
        <svg width="8" height="5" viewBox="0 0 8 5"><path d="M0 5 4 0 8 5z" fill="#fff"/></svg>
        <svg width="14" height="15" viewBox="0 0 14 15"><path d="M1 2h7v11H1zM8 5q4-1 3 4v5" fill="none" stroke="#fff" stroke-width="1.3"/><path d="M7 4h6v4l-3 2-3-2zM8 1v3M12 1v3" fill="#fff" stroke="#fff"/><path d="m1 7 6 7M7 7l-6 7" stroke="#e01818" stroke-width="2.2"/></svg>
        <svg width="15" height="12" viewBox="0 0 15 12"><path d="M1 12V10M4 12V8M7 12V6M10 12V3M13 12V0" stroke="#fff" stroke-width="2"/></svg>
        <svg width="14" height="14" viewBox="0 0 14 14"><path d="M0 4h2l4-4v14l-4-4H0z" fill="#fff"/><path d="M8 5q1.5 2 0 4M10 3q3 4 0 8M12 1q4 6 0 12" fill="none" stroke="#fff"/></svg>
        <div class="clock">15:13<br />11.3.2018 г.</div>
        <button class="peek" aria-label="Show desktop"></button>
      </div>`;
  }
}

/* ---------- desktop ---------- */

@customElement("app-root")
class AppRoot extends LitElement {
  static styles = css`
    :host { display: grid; grid-template-rows: minmax(0, 1fr) auto; height: 100vh; overflow: hidden; }
    .desk { position: relative; overflow: hidden; }
    .dream { position: absolute; left: 842px; top: 36px; right: -36px; }
    .eval { position: absolute; left: 247px; top: 467px; width: 769px; bottom: -60px; }
  `;

  render() {
    return html`<div class="desk"><sdr-window></sdr-window><evaluation-window class="eval"></evaluation-window><dream-window class="dream"></dream-window></div><task-bar></task-bar>`;
  }
}
